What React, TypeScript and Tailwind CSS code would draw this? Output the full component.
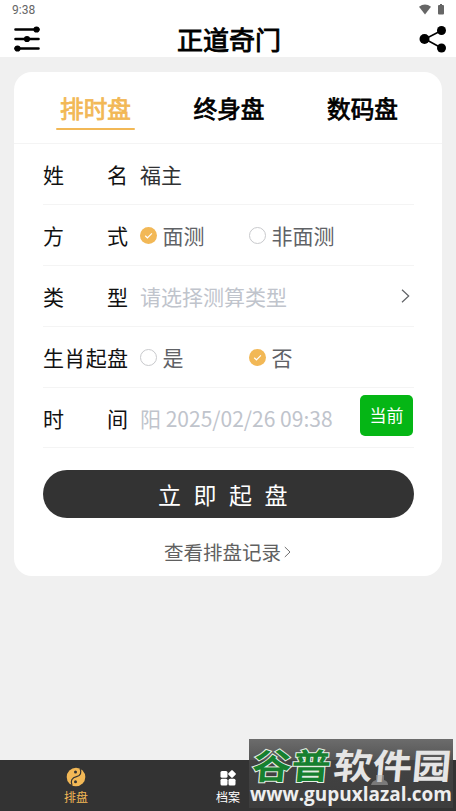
import type { ReactNode } from 'react';

function Row({ label, children }: { label: string; children: ReactNode }) {
  return (
    <div className="flex h-[60.9px] items-center border-b border-[#f4f4f4] pt-px text-[21px] leading-[30px]">
      <div className="flex w-[85px] shrink-0 justify-between text-[#111]">
        {label.split('').map((c) => (
          <span key={c}>{c}</span>
        ))}
      </div>
      <div className="ml-[12px] flex flex-1 items-center text-[#606266]">{children}</div>
    </div>
  );
}

function Radio({ checked, label }: { checked?: boolean; label: string }) {
  return (
    <div className="flex w-[109px] items-center gap-[5.500px] whitespace-nowrap">
      <svg width="17" height="17" viewBox="0 0 17 17" className="shrink-0">
        {checked ? (
          <>
            <circle cx="8.5" cy="8.5" r="8.5" fill="#f2b856" />
            <path d="M5.2 8.7l2.2 2.1 4.500-4.500" fill="none" stroke="#fff" strokeWidth="1.2" />
          </>
        ) : (
          <circle cx="8.5" cy="8.5" r="8" fill="#fff" stroke="#c8c9cc" />
        )}
      </svg>
      <span>{label}</span>
    </div>
  );
}

export default function App() {
  return (
    <div className="relative flex h-[811px] w-[456px] flex-col overflow-hidden bg-[#f0f0f0] font-['Noto_Sans_CJK_SC',sans-serif]">
      <header className="h-[57px] shrink-0 bg-white">
        <div className="flex h-[20px] items-center justify-between pr-[12px] pl-[12px]">
          <span className="font-[Roboto,sans-serif] text-[12px] leading-[20px] text-[#666]">9:38</span>
          <div className="flex items-center gap-[7px] pb-[2px]">
            <svg width="12" height="11" viewBox="0 0 12 11" fill="#666">
              <path d="M0 2.7Q6-1.7 12 2.7L6 10.4Z" />
            </svg>
            <svg width="6" height="11" viewBox="0 0 6 11" fill="#666">
              <path d="M2 0h2v1h1q1 0 1 1v7.500q0 1-1 1H1q-1 0-1-1V2q0-1 1-1h1Z" />
            </svg>
          </div>
        </div>
        <div className="flex h-[37px] items-center justify-between pr-[9px] pl-[14px]">
          <svg width="26" height="26" viewBox="0 0 26 26" stroke="#000" strokeWidth="2.600" strokeLinecap="round">
            <path d="M1.500 3.500h23M1.500 13h23M1.500 22.500h23" />
            <circle cx="22.500" cy="3.500" r="1.800" />
            <circle cx="13" cy="13" r="1.800" />
            <circle cx="3.500" cy="22.500" r="1.800" />
          </svg>
          <h1 className="mr-px text-[26px] leading-[37px] text-black [-webkit-text-stroke:0.9px_#000]">正道奇门</h1>
          <svg width="28" height="28" viewBox="0 0 28 28">
            <path d="M22.500 5.500L6 14l16.500 9" fill="none" stroke="#000" strokeWidth="1.600" />
            <circle cx="22.500" cy="5.500" r="4.500" />
            <circle cx="5.500" cy="14" r="5" />
            <circle cx="22.500" cy="23" r="4.500" />
          </svg>
        </div>
      </header>

      <main className="mx-[14px] mt-[15px] h-[504px] shrink-0 rounded-[18px] bg-white">
        <div className="flex h-[72px] justify-center border-b border-[#f4f4f4] pt-[16px] pl-[2px] text-[23.6px]">
          {['排时盘', '终身盘', '数码盘'].map((t, i) => (
            <div key={t} className="flex w-[133.500px] flex-col items-center">
              <span className={`leading-[40px] ${i === 0 ? 'text-[#f2b856] [-webkit-text-stroke:0.8px_#f2b856]' : 'text-black [-webkit-text-stroke:0.8px_#000]'}`}>{t}</span>
              {i === 0 && <div className="h-[2px] w-[79px] rounded-full bg-[#f2b856]" />}
            </div>
          ))}
        </div>
        <div className="pr-[28px] pl-[29px]">
          <Row label="姓名">
            <span className="text-[#303133]">福主</span>
          </Row>
          <Row label="方式">
            <Radio checked label="面测" />
            <Radio label="非面测" />
          </Row>
          <Row label="类型">
            <span className="flex-1 text-[#c0c4cc]">请选择测算类型</span>
            <svg width="9" height="14" viewBox="0 0 9 14" className="mr-[4px]">
              <path d="M1 .8L7.700 7 1 13.200" fill="none" stroke="#606266" strokeWidth="1.200" />
            </svg>
          </Row>
          <Row label="生肖起盘">
            <Radio label="是" />
            <Radio checked label="否" />
          </Row>
          <Row label="时间">
            <span className="flex-1 whitespace-nowrap text-[#c0c4cc]">阳 2025/02/26 09:38</span>
            <button className="mr-px mb-[6px] h-[41px] w-[53px] shrink-0 rounded-[5px] bg-[#05b615] text-[17px] text-white">当前</button>
          </Row>
          <button className="mt-[21.500px] block h-[48px] w-full rounded-full bg-[#333] text-center text-[23px] leading-[48px] tracking-[12.500px] text-white">
            <span className="ml-px">立即起盘</span>
          </button>
          <div className="mt-[19.500px] flex items-center justify-center gap-[3px] pr-[2px] text-[19.500px] leading-[30px] text-[#606060]">
            <span>查看排盘记录</span>
            <svg width="7" height="12" viewBox="0 0 7 12">
              <path d="M.8 1L6 6 .8 11" fill="none" stroke="#707070" />
            </svg>
          </div>
        </div>
      </main>

      <nav className="mt-auto flex h-[51px] shrink-0 bg-[#333] text-[12px] leading-[16px] text-white">
        <div className="flex flex-1 flex-col items-center pt-[7px] text-[#f2b856]">
          <svg width="20" height="20" viewBox="0 0 20 20">
            <circle cx="10" cy="10" r="9.300" fill="#f2b856" />
            <path d="M14 1.500c2 4 .5 7.500-3.500 8.200C6 10.500 4 14 6 18.500" fill="none" stroke="#333" strokeWidth="1.200" />
            <circle cx="9.500" cy="5" r="1.500" fill="#333" />
            <circle cx="9.500" cy="14.700" r="1.500" fill="#333" />
          </svg>
          <span className="mt-[2px]">排盘</span>
        </div>
        <div className="flex flex-1 flex-col items-center pt-[10px]">
          <svg width="16" height="16" viewBox="0 0 16 16" fill="#fff">
            <rect x=".5" y="1" width="7" height="6.800" rx="1.500" />
            <rect x=".5" y="8.700" width="7" height="6.800" rx="1.500" />
            <rect x="8.500" y="8.700" width="7" height="6.800" rx="1.500" />
            <rect x="9" y="1" width="6" height="6" rx="1" transform="rotate(45 12 4)" />
          </svg>
          <span className="mt-[3px]">档案</span>
        </div>
        <div className="flex-1" />
      </nav>

      <svg className="absolute top-[739px] left-[249px] overflow-visible" width="204" height="69" viewBox="0 0 204 69">
        <defs>
          <linearGradient id="shade" x1="0" y1="0" x2="0" y2="1">
            <stop offset="0" stopColor="#6c6c6c" />
            <stop offset=".3" stopColor="#555" />
            <stop offset=".31" stopColor="#434343" />
            <stop offset="1" stopColor="#3d3d3d" />
          </linearGradient>
        </defs>
        <rect width="204" height="69" fill="url(#shade)" />
        <g fontFamily="Noto Sans CJK SC, sans-serif" fontWeight="700" fontSize="35" transform="translate(3 0) skewX(-5)">
          <g transform="scale(1.12 1)">
            <text x="2.500" y="40" fill="#16802f" stroke="#e4eee4" strokeWidth="2" paintOrder="stroke">谷普</text>
            <text x="75" y="40" fill="#e5e5e5">软件园</text>
          </g>
        </g>
        <path d="M122 46q1-4 5-5v-5h8v5q4 1 4 5Z" fill="#aaa" opacity=".55" />
        <text x="1" y="62" textLength="202" lengthAdjust="spacingAndGlyphs" fill="#eee" fontFamily="Open Sans, sans-serif" fontWeight="700" fontSize="19">www.gupuxlazal.com</text>
      </svg>
    </div>
  );
}
